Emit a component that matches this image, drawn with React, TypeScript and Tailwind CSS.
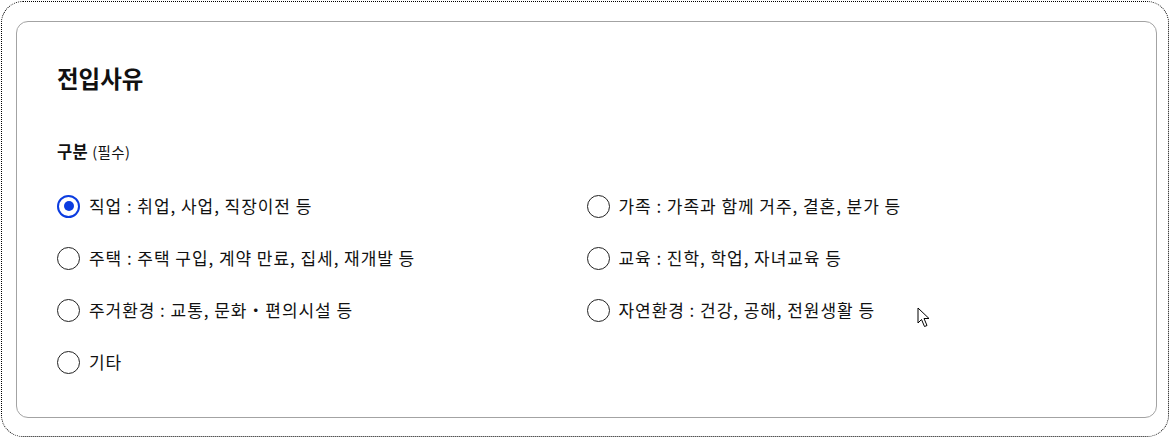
import React from 'react';

const options = [
  { id: 'job', label: '직업 : 취업, 사업, 직장이전 등' },
  { id: 'family', label: '가족 : 가족과 함께 거주, 결혼, 분가 등' },
  { id: 'house', label: '주택 : 주택 구입, 계약 만료, 집세, 재개발 등' },
  { id: 'edu', label: '교육 : 진학, 학업, 자녀교육 등' },
  { id: 'env', label: '주거환경 : 교통, 문화・편의시설 등' },
  { id: 'nature', label: '자연환경 : 건강, 공해, 전원생활 등' },
  { id: 'etc', label: '기타' },
];

const Radio: React.FC<{ checked: boolean }> = ({ checked }) => (
  <span
    className={`flex h-[23px] w-[23px] shrink-0 items-center justify-center rounded-full border-[1.5px] bg-white ${
      checked ? 'border-[2px] border-[#0b3ce0]' : 'border-[#222]'
    }`}
  >
    {checked && <span className="h-[10px] w-[10px] rounded-full bg-[#0b3ce0]" />}
  </span>
);

export default function App() {
  const [selected, setSelected] = React.useState('job');

  return (
    <div
      className="relative h-[438px] w-[1170px] bg-white p-px text-[#111]"
      style={{ fontFamily: '"Noto Sans CJK KR", "Noto Sans", sans-serif' }}
    >
      <div className="h-full rounded-[22px] border border-dotted border-black pb-[18px] pl-[14px] pr-[11px] pt-[19px]">
        <div className="h-full rounded-xl border border-[#a3a3a3] px-10 pt-[41px]">
          <h2 className="text-[23.5px] font-bold leading-[30px]">전입사유</h2>

          <p className="mt-[48px] text-[16.5px] font-bold leading-[20px] tracking-[0.4px]">
            구분 <span className="text-[14.5px] font-normal">(필수)</span>
          </p>

          <div className="mt-[18px] grid grid-cols-2">
            {options.map((opt) => (
              <label
                key={opt.id}
                onClick={() => setSelected(opt.id)}
                className="flex h-[52px] cursor-pointer items-center gap-[9px] text-[17px] tracking-[0.95px]"
              >
                <Radio checked={selected === opt.id} />
                <span>{opt.label}</span>
              </label>
            ))}
          </div>
        </div>
      </div>

      {/* mouse pointer */}
      <svg className="absolute left-[917px] top-[307px]" width="14" height="22" viewBox="0 0 14 22">
        <path d="M1 1 L1 16 L4.5 12.5 L7.5 19.5 L10 18.5 L7 11.5 L12 11.5 Z" fill="white" stroke="black" strokeWidth="1" strokeLinejoin="round" />
      </svg>
    </div>
  );
}
